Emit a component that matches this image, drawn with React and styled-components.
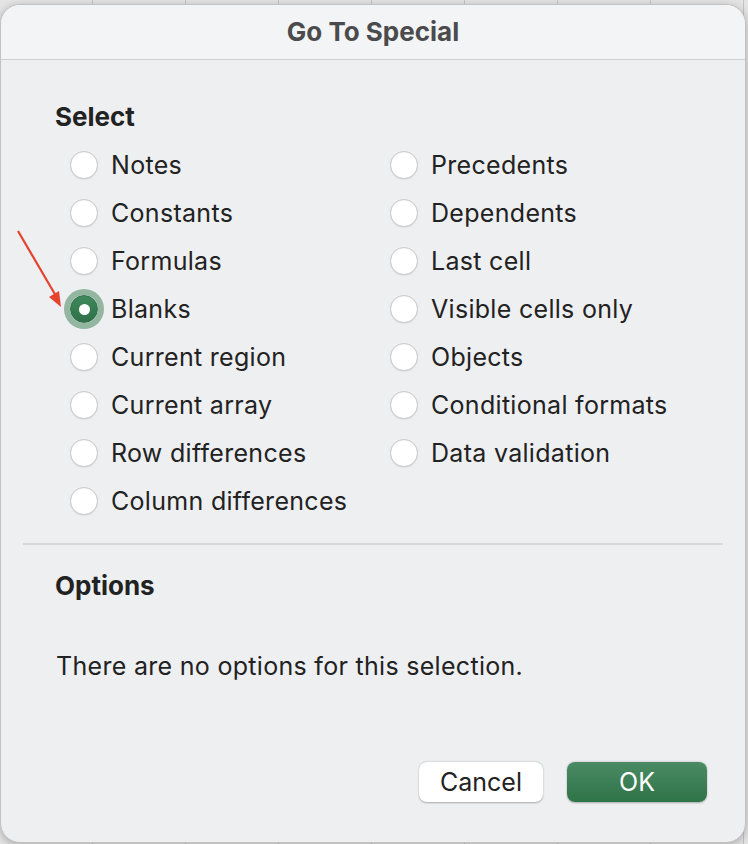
import React from 'react';
import styled, { createGlobalStyle } from 'styled-components';

const Global = createGlobalStyle`
    html, body {
        margin: 0;
        padding: 0;
        background: #dedede;
    }
    body {
        font-family: Inter, "Noto Sans", sans-serif;
        -webkit-font-smoothing: antialiased;
    }
`

const Backdrop = styled.div`
    width: 748px;
    height: 844px;
    overflow: hidden;
    background:
        repeating-linear-gradient(90deg, transparent 0 92px, #c4c4c4 92px 93px),
        #e4e4e4;
`

const Dialog = styled.div`
    position: relative;
    box-sizing: border-box;
    width: 746px;
    height: 839px;
    margin-top: 4px;
    background: #eeeff1;
    border: 1px solid #c2c2c2;
    border-radius: 20px;
    box-shadow: 0 2px 8px rgba(0,0,0,0.25);
    display: flex;
    flex-direction: column;
    overflow: hidden;
`

const TitleBar = styled.div`
    height: 55px;
    flex: none;
    display: flex;
    align-items: center;
    justify-content: center;
    padding-bottom: 2px;
    box-sizing: border-box;
    background: #f3f4f5;
    border-bottom: 1px solid #cfcfd1;
    font-size: 26px;
    font-weight: 700;
    color: #4b4b4d;
`

const Body = styled.div`
    flex: 1;
    display: flex;
    flex-direction: column;
    padding: 41px 22px 0;
`

const Heading = styled.div`
    padding-left: 32px;
    font-size: 26px;
    line-height: 32px;
    font-weight: 700;
    color: #222;
    margin-top: ${p => p.$top || 0}px;
`

const Grid = styled.div`
    margin-top: 8px;
    padding-left: 47px;
    display: grid;
    grid-template-columns: 320px 1fr;
    grid-template-rows: repeat(8, 48px);
    grid-auto-flow: column;
`

const Row = styled.label`
    display: flex;
    align-items: center;
    gap: 13px;
    font-size: 25px;
    letter-spacing: 0.3px;
    color: #222;
`

const Radio = styled.span`
    position: relative;
    box-sizing: border-box;
    width: 28px;
    height: 28px;
    border-radius: 50%;
    flex: none;
    background: ${p => p.$on ? 'linear-gradient(#3f8a5c, #2f6f47)' : '#fff'};
    border: 1px solid ${p => p.$on ? '#2f6f47' : '#cbcbcd'};
    box-shadow: ${p => p.$on
        ? '0 0 0 6px rgba(72, 135, 95, 0.55)'
        : 'inset 0 1px 1px rgba(0,0,0,0.04), 0 0.5px 1px rgba(0,0,0,0.12)'};
    &::after {
        content: '';
        display: ${p => p.$on ? 'block' : 'none'};
        position: absolute;
        left: 50%;
        top: 50%;
        width: 11px;
        height: 11px;
        margin: -5.5px 0 0 -5.5px;
        border-radius: 50%;
        background: #fff;
    }
`

const Divider = styled.div`
    height: 2px;
    margin-top: 18px;
    background: #d7d8da;
`

const Message = styled.div`
    margin-top: 48px;
    padding-left: 33px;
    font-size: 25px;
    letter-spacing: 0.3px;
    line-height: 32px;
    color: #222;
`

const Footer = styled.div`
    margin-top: auto;
    padding: 0 16px 40px 0;
    display: flex;
    justify-content: flex-end;
    gap: 24px;
`

const Button = styled.button`
    box-sizing: border-box;
    height: 40px;
    width: ${p => p.$w}px;
    border: none;
    border-radius: 8px;
    font-family: inherit;
    font-size: 25px;
    color: ${p => p.$primary ? '#fff' : '#222'};
    background: ${p => p.$primary ? 'linear-gradient(#4a8b64, #2f7348)' : '#fff'};
    box-shadow: 0 0.5px 2px rgba(0,0,0,0.3);
`

const Arrow = styled.svg`
    position: absolute;
    left: 0;
    top: 220px;
`

const left = ['Notes', 'Constants', 'Formulas', 'Blanks', 'Current region', 'Current array', 'Row differences', 'Column differences'];
const right = ['Precedents', 'Dependents', 'Last cell', 'Visible cells only', 'Objects', 'Conditional formats', 'Data validation'];

const App = () => (
    <Backdrop>
        <Global />
        <Dialog>
            <TitleBar>Go To Special</TitleBar>
            <Body>
                <Heading>Select</Heading>
                <Grid>
                    {left.map(t => (
                        <Row key={t}><Radio $on={t === 'Blanks'} />{t}</Row>
                    ))}
                    {right.map(t => (
                        <Row key={t}><Radio />{t}</Row>
                    ))}
                </Grid>
                <Divider />
                <Heading $top={25}>Options</Heading>
                <Message>There are no options for this selection.</Message>
                <Footer>
                    <Button $w={124}>Cancel</Button>
                    <Button $w={140} $primary>OK</Button>
                </Footer>
            </Body>
            {/* annotation arrow */}
            <Arrow width="70" height="90" viewBox="0 0 70 90">
                <line x1="17" y1="6" x2="55" y2="71" stroke="#e5432e" strokeWidth="2.2" />
                <polygon points="60,82 48,72 58,66" fill="#e5432e" />
            </Arrow>
        </Dialog>
    </Backdrop>
);

export default App
